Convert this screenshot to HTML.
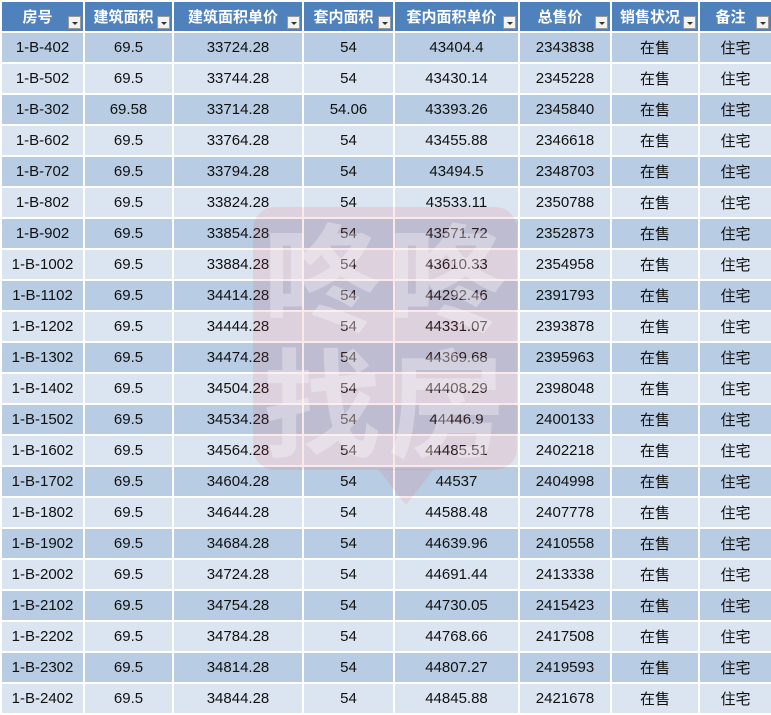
<!DOCTYPE html>
<html><head><meta charset="utf-8"><style>
body{margin:0;width:771px;height:714px;overflow:hidden;background:#fff;font-family:"Liberation Sans","Noto Sans CJK SC",sans-serif;position:relative}
table{border-collapse:collapse;table-layout:fixed;width:771px}
td,th{height:29px;padding:0;text-align:center;font-size:15px;color:#111;border:2px solid #fff;font-weight:normal;position:relative}
th{background:#4f81bd;color:#fff;font-weight:bold;font-size:15px;text-align:center}
th span{padding-right:10px}
th i{position:absolute;right:2px;bottom:2px;width:13px;height:13px;background:#f2f2f2;border:1px solid #999;box-sizing:border-box}
th i:after{content:"";position:absolute;left:3px;top:5px;border-left:3px solid transparent;border-right:3px solid transparent;border-top:3px solid #333}
tr:nth-child(even) td{background:#b8cce4}
tr:nth-child(odd) td{background:#dbe5f1}
#wm{position:absolute;left:253px;top:207px;width:264px;height:263px;border-radius:22px;background:rgba(225,90,100,0.14)}
#wm:after{content:"";position:absolute;left:125px;top:262px;border-left:28px solid transparent;border-right:28px solid transparent;border-top:36px solid rgba(225,90,100,0.14)}
#wm div{position:absolute;color:rgba(255,255,255,0.32);font-weight:bold;font-size:118px;line-height:120px;font-family:"Noto Sans CJK SC",sans-serif}
</style></head><body>
<table>
<colgroup><col style="width:83px"><col style="width:89px"><col style="width:130px"><col style="width:91px"><col style="width:125px"><col style="width:92px"><col style="width:88px"><col style="width:73px"></colgroup>
<tr><th><span>房号</span><i></i></th><th><span>建筑面积</span><i></i></th><th><span>建筑面积单价</span><i></i></th><th><span>套内面积</span><i></i></th><th><span>套内面积单价</span><i></i></th><th><span>总售价</span><i></i></th><th><span>销售状况</span><i></i></th><th><span>备注</span><i></i></th></tr>
<tr><td>1-B-402</td><td>69.5</td><td>33724.28</td><td>54</td><td>43404.4</td><td>2343838</td><td>在售</td><td>住宅</td></tr>
<tr><td>1-B-502</td><td>69.5</td><td>33744.28</td><td>54</td><td>43430.14</td><td>2345228</td><td>在售</td><td>住宅</td></tr>
<tr><td>1-B-302</td><td>69.58</td><td>33714.28</td><td>54.06</td><td>43393.26</td><td>2345840</td><td>在售</td><td>住宅</td></tr>
<tr><td>1-B-602</td><td>69.5</td><td>33764.28</td><td>54</td><td>43455.88</td><td>2346618</td><td>在售</td><td>住宅</td></tr>
<tr><td>1-B-702</td><td>69.5</td><td>33794.28</td><td>54</td><td>43494.5</td><td>2348703</td><td>在售</td><td>住宅</td></tr>
<tr><td>1-B-802</td><td>69.5</td><td>33824.28</td><td>54</td><td>43533.11</td><td>2350788</td><td>在售</td><td>住宅</td></tr>
<tr><td>1-B-902</td><td>69.5</td><td>33854.28</td><td>54</td><td>43571.72</td><td>2352873</td><td>在售</td><td>住宅</td></tr>
<tr><td>1-B-1002</td><td>69.5</td><td>33884.28</td><td>54</td><td>43610.33</td><td>2354958</td><td>在售</td><td>住宅</td></tr>
<tr><td>1-B-1102</td><td>69.5</td><td>34414.28</td><td>54</td><td>44292.46</td><td>2391793</td><td>在售</td><td>住宅</td></tr>
<tr><td>1-B-1202</td><td>69.5</td><td>34444.28</td><td>54</td><td>44331.07</td><td>2393878</td><td>在售</td><td>住宅</td></tr>
<tr><td>1-B-1302</td><td>69.5</td><td>34474.28</td><td>54</td><td>44369.68</td><td>2395963</td><td>在售</td><td>住宅</td></tr>
<tr><td>1-B-1402</td><td>69.5</td><td>34504.28</td><td>54</td><td>44408.29</td><td>2398048</td><td>在售</td><td>住宅</td></tr>
<tr><td>1-B-1502</td><td>69.5</td><td>34534.28</td><td>54</td><td>44446.9</td><td>2400133</td><td>在售</td><td>住宅</td></tr>
<tr><td>1-B-1602</td><td>69.5</td><td>34564.28</td><td>54</td><td>44485.51</td><td>2402218</td><td>在售</td><td>住宅</td></tr>
<tr><td>1-B-1702</td><td>69.5</td><td>34604.28</td><td>54</td><td>44537</td><td>2404998</td><td>在售</td><td>住宅</td></tr>
<tr><td>1-B-1802</td><td>69.5</td><td>34644.28</td><td>54</td><td>44588.48</td><td>2407778</td><td>在售</td><td>住宅</td></tr>
<tr><td>1-B-1902</td><td>69.5</td><td>34684.28</td><td>54</td><td>44639.96</td><td>2410558</td><td>在售</td><td>住宅</td></tr>
<tr><td>1-B-2002</td><td>69.5</td><td>34724.28</td><td>54</td><td>44691.44</td><td>2413338</td><td>在售</td><td>住宅</td></tr>
<tr><td>1-B-2102</td><td>69.5</td><td>34754.28</td><td>54</td><td>44730.05</td><td>2415423</td><td>在售</td><td>住宅</td></tr>
<tr><td>1-B-2202</td><td>69.5</td><td>34784.28</td><td>54</td><td>44768.66</td><td>2417508</td><td>在售</td><td>住宅</td></tr>
<tr><td>1-B-2302</td><td>69.5</td><td>34814.28</td><td>54</td><td>44807.27</td><td>2419593</td><td>在售</td><td>住宅</td></tr>
<tr><td>1-B-2402</td><td>69.5</td><td>34844.28</td><td>54</td><td>44845.88</td><td>2421678</td><td>在售</td><td>住宅</td></tr>
</table>
<div id="wm"><div style="left:10px;top:5px">咚</div><div style="left:135px;top:5px">咚</div><div style="left:10px;top:130px">找</div><div style="left:135px;top:130px">房</div></div>
</body></html>
